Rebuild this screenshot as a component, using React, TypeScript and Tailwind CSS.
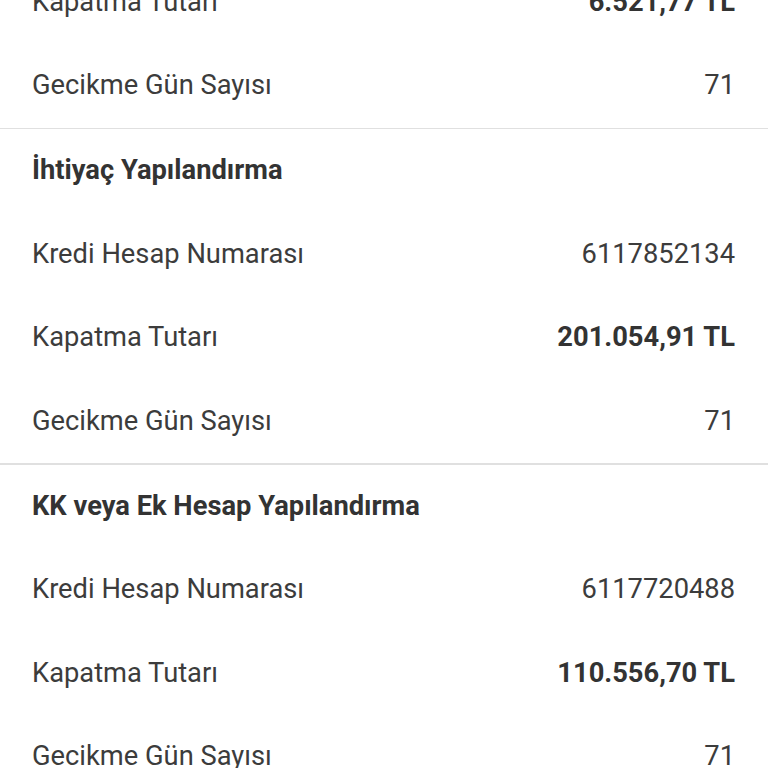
import React from "react";

type Row = { label: string; value?: string; bold?: boolean; heading?: boolean };

const Item = ({ r }: { r: Row }) => (
  <div className="flex h-[83.5px] items-center justify-between pl-8 pr-[33px]">
    <span className={r.heading ? "font-bold text-[#333333]" : "text-[#3c3c3c]"}>{r.label}</span>
    {r.value && (
      <span className={r.bold ? "font-bold text-[#333333]" : "text-[#3c3c3c]"}>{r.value}</span>
    )}
  </div>
);

const Divider = () => <div className="h-[1.5px] bg-[#e0e0e0]" />;

export default function App() {
  const groups: Row[][] = [
    [
      { label: "Kapatma Tutarı", value: "6.521,77 TL", bold: true },
      { label: "Gecikme Gün Sayısı", value: "71" },
    ],
    [
      { label: "İhtiyaç Yapılandırma", heading: true },
      { label: "Kredi Hesap Numarası", value: "6117852134" },
      { label: "Kapatma Tutarı", value: "201.054,91 TL", bold: true },
      { label: "Gecikme Gün Sayısı", value: "71" },
    ],
    [
      { label: "KK veya Ek Hesap Yapılandırma", heading: true },
      { label: "Kredi Hesap Numarası", value: "6117720488" },
      { label: "Kapatma Tutarı", value: "110.556,70 TL", bold: true },
      { label: "Gecikme Gün Sayısı", value: "71" },
    ],
  ];
  return (
    <div
      className="h-[768px] w-[768px] overflow-hidden bg-white text-[27.3px]"
      style={{ fontFamily: "Roboto, 'Noto Sans', sans-serif" }}
    >
      <div className="mt-[-39.5px]">
        {groups.map((g, i) => (
          <div key={i}>
            {i > 0 && <Divider />}
            {g.map((r, j) => (
              <Item key={j} r={r} />
            ))}
          </div>
        ))}
      </div>
    </div>
  );
}
